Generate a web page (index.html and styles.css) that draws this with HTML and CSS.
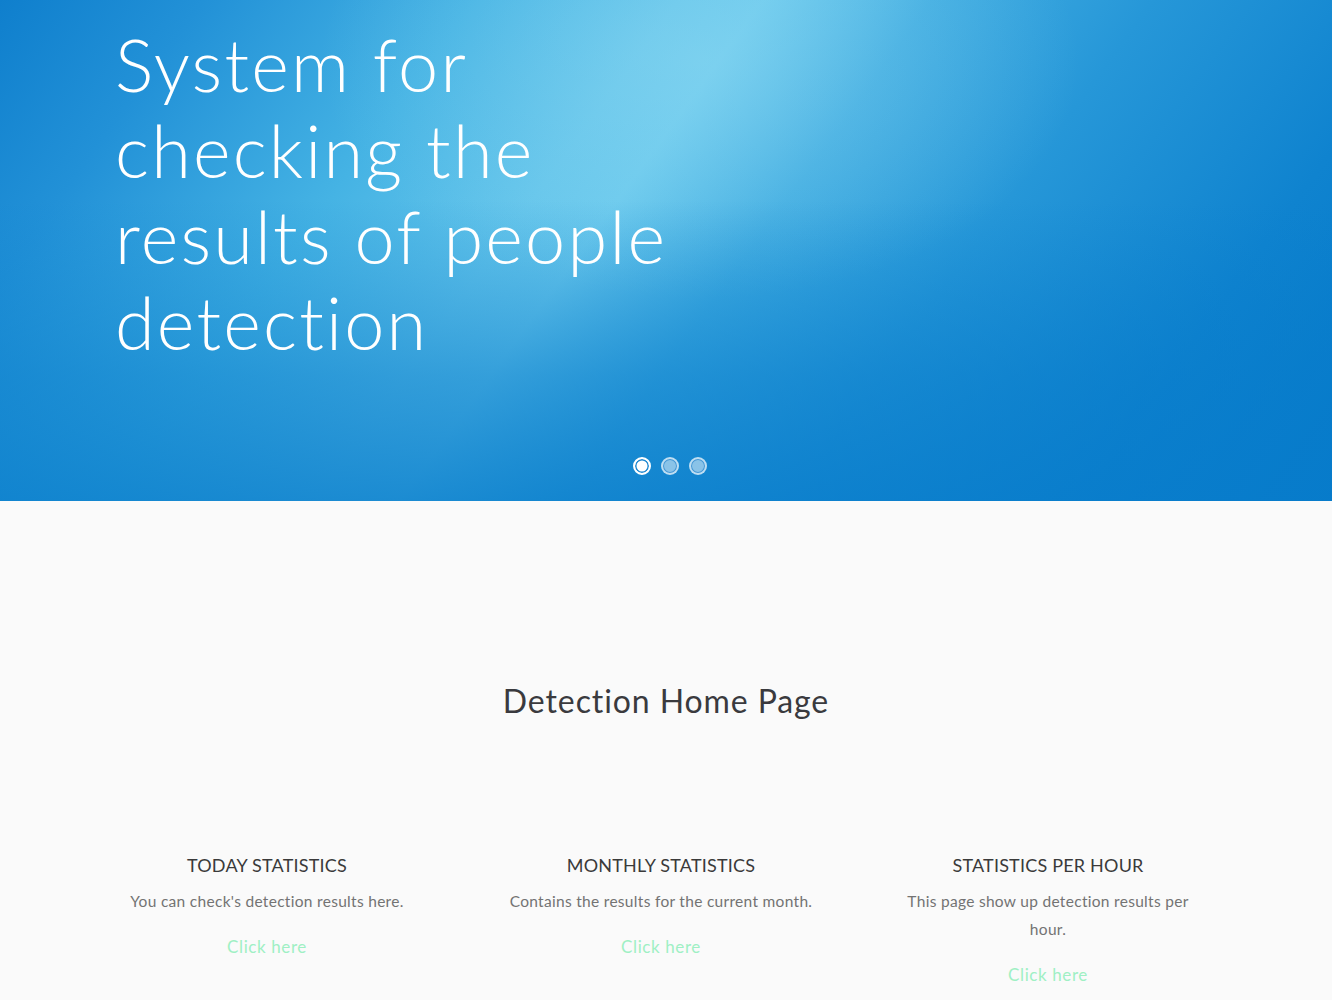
FILE: index.html
```html
<!DOCTYPE html>
<html lang="en">
<head>
<meta charset="utf-8">
<title>Detection Home Page</title>
<link rel="stylesheet" href="styles.css">
</head>
<body>
<header class="hero">
  <div class="hero-inner">
    <h1 class="hero-title">System for checking the results of people detection</h1>
  </div>
  <ol class="dots">
    <li class="dot active"></li>
    <li class="dot"></li>
    <li class="dot"></li>
  </ol>
</header>
<main class="content">
  <h2 class="page-title">Detection Home Page</h2>
  <section class="cards">
    <div class="card">
      <h3 class="card-title">TODAY STATISTICS</h3>
      <p class="card-text">You can check's detection results here.</p>
      <a class="card-link" href="#">Click here</a>
    </div>
    <div class="card">
      <h3 class="card-title">MONTHLY STATISTICS</h3>
      <p class="card-text">Contains the results for the current month.</p>
      <a class="card-link" href="#">Click here</a>
    </div>
    <div class="card">
      <h3 class="card-title">STATISTICS PER HOUR</h3>
      <p class="card-text">This page show up detection results per hour.</p>
      <a class="card-link" href="#">Click here</a>
    </div>
  </section>
</main>
</body>
</html>
```
FILE: styles.css
```css
html, body {
  margin: 0;
  padding: 0;
}
body {
  background: #fafafa;
  font-family: "Lato", "Open Sans", sans-serif;
  color: #333;
}
.hero {
  position: relative;
  height: 501px;
  background:
    linear-gradient(to bottom, rgba(8,124,203,0) 40%, rgba(8,124,203,0.55) 75%, rgba(8,124,203,0.8) 100%),
    radial-gradient(ellipse 380px 240px at 700px 60px, rgba(150,220,242,0.4), rgba(150,220,242,0) 100%),
    linear-gradient(126deg, #0f7fcd 0%, #2291d7 12%, #45b3e4 28%, #64c5eb 40%, #6ac9ed 45%, #40ace1 55%, #2697d8 68%, #0f83cf 85%, #0479c9 100%);
  overflow: hidden;
}
.hero-inner {
  padding: 21px 0 0 115px;
}
.hero-title {
  margin: 0;
  width: 640px;
  font-weight: 300;
  font-size: 72px;
  line-height: 86px;
  color: #fff;
  letter-spacing: 2.2px;
}
.dots {
  position: absolute;
  left: 0;
  right: 0;
  bottom: 26px;
  margin: 0;
  padding: 0 0 0 8px;
  list-style: none;
  display: flex;
  justify-content: center;
  gap: 10px;
}
.dot {
  width: 14px;
  height: 14px;
  border-radius: 50%;
  border: 2px solid rgba(255,255,255,0.45);
  background: rgba(255,255,255,0.5);
  box-shadow: inset 0 0 0 1px rgba(20,120,200,0.6);
}
.dot.active {
  border-color: #fff;
  background: #fff;
  box-shadow: inset 0 0 0 1.5px #1a86d0;
}
.content {
  padding: 180px 0 40px;
}
.page-title {
  margin: 0;
  text-align: center;
  font-weight: 400;
  font-size: 32px;
  line-height: 40px;
  color: #3a3a3e;
  letter-spacing: 0.9px;
}
.cards {
  display: grid;
  grid-template-columns: 394px 394px 380px;
  justify-content: start;
  padding-left: 70px;
  margin-top: 130px;
}
.card {
  text-align: center;
  padding: 0 40px;
}
.card-title {
  margin: 0;
  font-weight: 400;
  font-size: 18px;
  line-height: 28px;
  color: #3a3a3a;
  letter-spacing: 0.2px;
}
.card-text {
  margin: 8px 0 0;
  font-size: 15.5px;
  line-height: 28px;
  color: #737373;
  font-weight: 400;
  letter-spacing: 0.3px;
}
.card-link {
  display: inline-block;
  margin-top: 20px;
  font-size: 17px;
  line-height: 24px;
  color: #9ff0c4;
  text-decoration: none;
  letter-spacing: 0.6px;
}
```
